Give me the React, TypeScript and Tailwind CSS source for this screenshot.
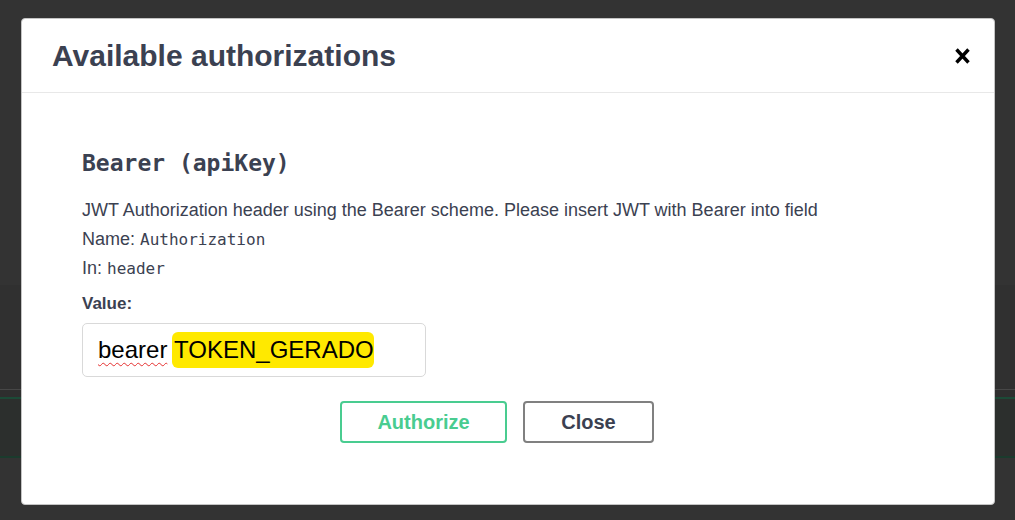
import React from "react";

const sans = "font-['Liberation_Sans',Arial,sans-serif]";
const mono = "font-['DejaVu_Sans_Mono','Liberation_Mono',monospace]";

function CloseIcon() {
    return (
        <svg width="15" height="16" viewBox="0 0 15 16" className="block">
            <path d="M1.5 1.5 L13.5 14.5 M13.5 1.5 L1.5 14.5" stroke="#000" strokeWidth="3.4" strokeLinecap="butt"/>
        </svg>
    );
}

export default function App() {
    return (
        <div className={`relative w-[1015px] h-[520px] overflow-hidden bg-[#333333] ${sans}`}>

            {/* page behind the overlay */}
            <div className="flex flex-col w-full h-full">
                <div className="h-[285px] bg-[#333333]"/>
                <div className="h-[104px] bg-[#303030]"/>
                <div className="h-px bg-[#474747]"/>
                <div className="h-[7px] bg-[#2e2e2e]"/>
                <div className="h-[2px] bg-[#1c4a37]"/>
                <div className="h-[57px] bg-[#2c2f2d]"/>
                <div className="h-[2px] bg-[#1b3b2d]"/>
                <div className="flex-1 bg-[#333333]"/>
            </div>

            {/* modal */}
            <div className="absolute left-[21px] top-[18px] w-[974px] h-[487px] bg-white rounded-[4px] border border-[#c4c4c4] flex flex-col">

                {/* header */}
                <div className="h-[74px] flex items-center justify-between pl-[30px] pr-[24px] border-b border-[#e8e8e8]">
                    <h3 className="text-[30px] leading-[36px] font-bold text-[#3b4151] pt-[1px]">
                        Available authorizations
                    </h3>
                    <button className="w-[15px] h-[16px] flex items-center justify-center">
                        <CloseIcon/>
                    </button>
                </div>

                {/* body */}
                <div className="flex flex-col pl-[60px] pt-[56px] text-[#3b4151]">

                    <h4 className={`${mono} text-[23px] leading-[28px] font-bold`}>
                        Bearer (apiKey)
                    </h4>

                    <div className="mt-[19px] text-[18px] leading-[29px]">
                        <p>JWT Authorization header using the Bearer scheme. Please insert JWT with Bearer into field</p>
                        <p>Name: <code className={`${mono} text-[16px]`}>Authorization</code></p>
                        <p>In: <code className={`${mono} text-[16px]`}>header</code></p>
                    </div>

                    <label className="mt-[9px] text-[17px] leading-[24px] font-bold">
                        Value:
                    </label>

                    <div className="mt-[7px] w-[344px] h-[54px] border border-[#d9d9d9] rounded-[5px] flex items-center pl-[15px] text-[24px] text-black">
                        <span className="underline decoration-wavy decoration-[#e53030] decoration-1 underline-offset-[4px]">bearer</span>
                        <span>&nbsp;</span>
                        <span className="bg-[#ffe900] rounded-[6px] -ml-[2px] pl-[2px]">TOKEN_GERADO</span>
                    </div>

                    <div className="mt-[24px] flex gap-[16px] pl-[258px]">
                        <button className="w-[167px] h-[42px] border-2 border-[#49cc90] rounded-[4px] text-[20px] font-bold text-[#49cc90]">
                            Authorize
                        </button>
                        <button className="w-[131px] h-[42px] border-2 border-[#808080] rounded-[4px] text-[20px] font-bold text-[#3b4151]">
                            Close
                        </button>
                    </div>

                </div>

            </div>

        </div>
    );
}
